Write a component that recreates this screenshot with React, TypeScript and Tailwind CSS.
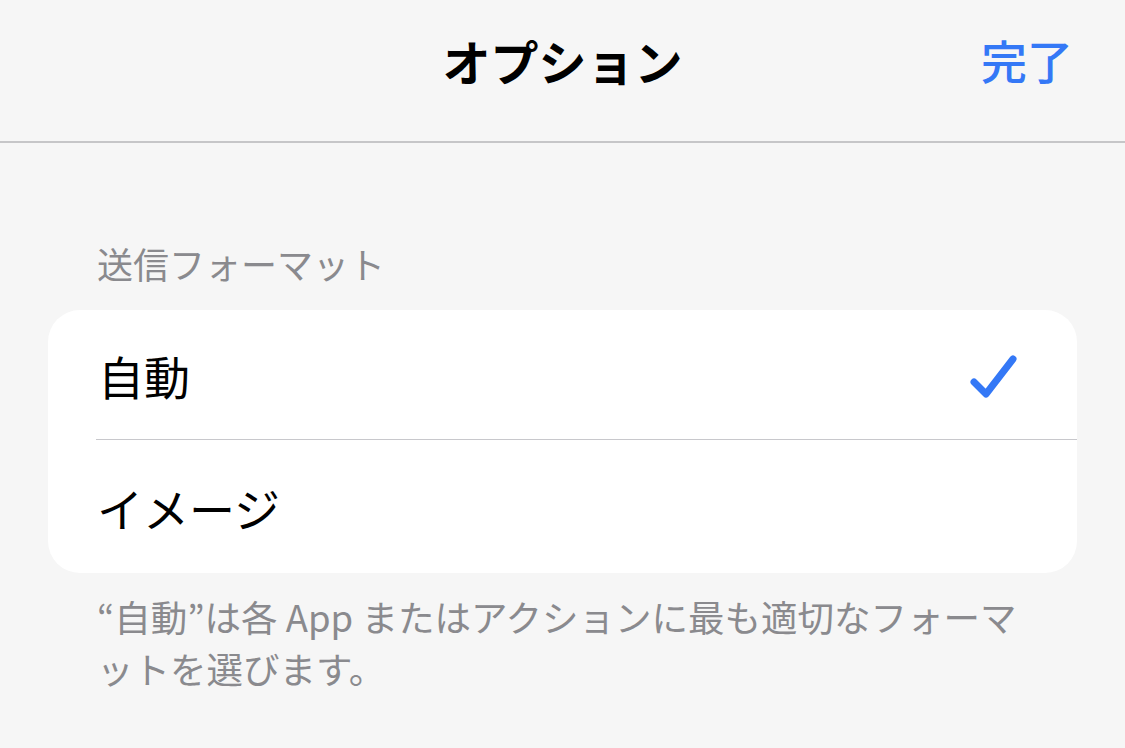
import React from "react";

export default function App() {
  const font = { fontFamily: '"Noto Sans CJK JP", "Noto Sans", sans-serif' };
  return (
    <div className="w-[1125px] h-[748px] bg-[#f6f6f6] overflow-hidden" style={font}>
      <div className="relative h-[143px] border-b-2 border-[#c6c6c8] bg-[#f6f6f6]">
        <div className="h-[120px] flex items-center justify-center">
          <span className="text-[48px] font-bold text-black leading-none">オプション</span>
        </div>
        <span className="absolute right-[52px] top-[36px] text-[46px] font-medium text-[#3478f6] leading-none">完了</span>
      </div>
      <div className="px-[48px]">
        <div className="pt-[102px] pl-[49px] mb-[29px] text-[36px] text-[#8a8a8e] leading-none">
          送信フォーマット
        </div>
        <div className="bg-white rounded-[32px] overflow-hidden">
          <div className="pl-[48px]">
            <div className="h-[130px] flex items-center justify-between pl-[2px] pr-[58px] border-b-[1.5px] border-[#c8c8cc]">
              <span className="text-[46px] text-black leading-none">自動</span>
              <svg width="50" height="46" viewBox="0 0 50 46" fill="none" className="mt-[4px]">
                <path d="M5 28 L17 40 L44 5" stroke="#3478f6" strokeWidth="7" strokeLinecap="round" strokeLinejoin="round" />
              </svg>
            </div>
          </div>
          <div className="h-[133px] flex items-center pl-[49px]">
            <span className="text-[46px] text-black leading-none">イメージ</span>
          </div>
        </div>
        <div className="pl-[49px] pt-[18px] w-[1000px] text-[36.5px] leading-[52px] text-[#8a8a8e]">
          “自動”は各 App またはアクションに最も適切なフォーマ<br />ットを選びます。
        </div>
      </div>
    </div>
  );
}
